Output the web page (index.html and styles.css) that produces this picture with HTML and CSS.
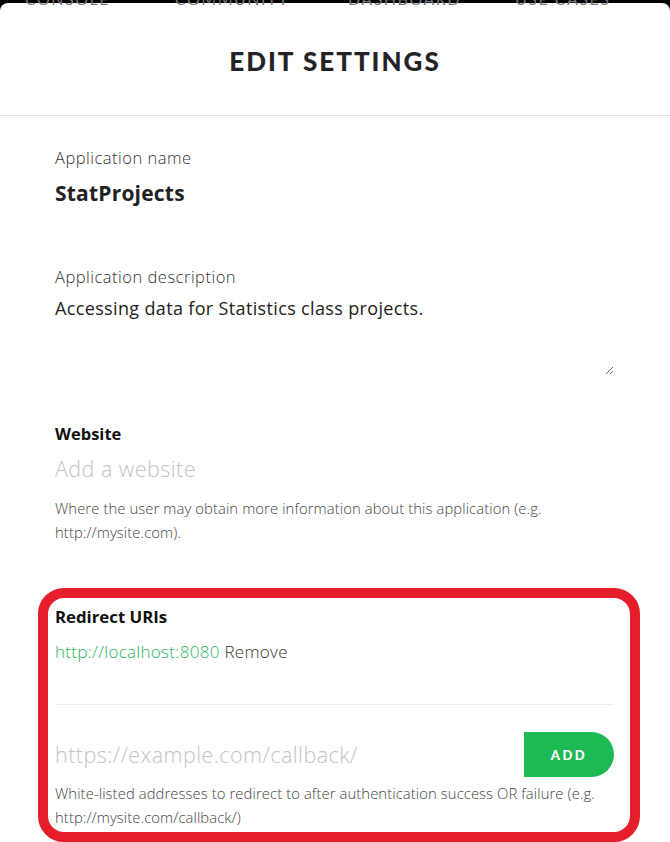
FILE: index.html
```html
<!DOCTYPE html>
<html lang="en">
<head>
<meta charset="utf-8">
<title>Edit Settings</title>
<link rel="stylesheet" href="styles.css">
</head>
<body>
<div class="topnav">
  <span class="nav-item n1">Console</span>
  <span class="nav-item n2">Community</span>
  <span class="nav-item n3">Dashboard</span>
  <span class="nav-item n4">Use Cases</span>
</div>
<div class="modal">
  <header class="modal-header">
    <h1 class="modal-title">Edit Settings</h1>
  </header>
  <form class="modal-body">
    <div class="group g-name">
      <div class="label">Application name</div>
      <div class="value">StatProjects</div>
    </div>
    <div class="group g-desc">
      <div class="label">Application description</div>
      <textarea class="textarea">Accessing data for Statistics class projects.</textarea>
    </div>
    <div class="group g-site">
      <div class="label-bold">Website</div>
      <input class="text-input" type="text" placeholder="Add a website">
      <p class="help">Where the user may obtain more information about this application (e.g. http://mysite.com).</p>
    </div>
    <div class="group g-redirect">
      <div class="label-bold">Redirect URIs</div>
      <div class="uri-row"><span class="uri">http://localhost:8080</span> <span class="remove">Remove</span></div>
      <div class="divider"></div>
      <div class="add-row">
        <input class="text-input add-input" type="text" placeholder="https://example.com/callback/">
        <button class="add-btn" type="button">Add</button>
      </div>
      <p class="help help-redirect">White-listed addresses to redirect to after authentication success OR failure (e.g. http://mysite.com/callback/)</p>
    </div>
  </form>
</div>
</body>
</html>
```
FILE: styles.css
```css
* { box-sizing: border-box; }
html, body { margin: 0; padding: 0; }
body {
  background: #000;
  font-family: "Open Sans", "Liberation Sans", sans-serif;
  color: #222;
  height: 842px;
  overflow: hidden;
  position: relative;
}
.topnav {
  position: absolute;
  top: 0; left: 0; right: 0;
  height: 9px;
  overflow: hidden;
  z-index: 5;
}
.nav-item {
  position: absolute;
  top: -9px;
  font-family: "Lato", sans-serif;
  font-size: 16px;
  line-height: 16px;
  text-transform: uppercase;
  letter-spacing: 1.5px;
  color: #777;
}
.n1 { left: 25px; }
.n2 { left: 175px; }
.n3 { left: 348px; }
.n4 { left: 515px; }
.modal {
  margin-top: 3px;
  background: #fff;
  border-radius: 8px 8px 0 0;
  min-height: 839px;
}
.modal-header {
  height: 113px;
  border-bottom: 1px solid #e3e3e3;
  display: flex;
  align-items: center;
  justify-content: center;
}
.modal-title {
  margin: 0;
  padding-top: 3px;
  font-family: "Lato", sans-serif;
  font-size: 26px;
  font-weight: 900;
  letter-spacing: 2px;
  text-transform: uppercase;
  color: #222326;
}
.modal-body {
  padding: 30px 56px 0 55px;
  display: flex;
  flex-direction: column;
}
.label {
  font-size: 16.5px;
  line-height: 24px;
  font-weight: 300;
  letter-spacing: 0.5px;
  color: #333;
}
.value {
  margin-top: 9px;
  font-size: 21px;
  line-height: 28px;
  font-weight: 700;
  letter-spacing: 0.2px;
  color: #222;
}
.g-desc { margin-top: 58px; }
.textarea {
  display: block;
  width: 100%;
  height: 80px;
  margin-top: 6px;
  padding: 0;
  border: none;
  outline: none;
  resize: vertical;
  font-family: inherit;
  font-size: 18px;
  line-height: 26px;
  letter-spacing: 0.35px;
  color: #222;
  background: transparent;
}
.g-site { margin-top: 47px; }
.label-bold {
  font-size: 16.5px;
  line-height: 24px;
  font-weight: 700;
  color: #111;
}
.text-input {
  display: block;
  width: 100%;
  height: 30px;
  margin-top: 7px;
  padding: 0;
  border: none;
  outline: none;
  font-family: inherit;
  font-size: 21.5px;
  font-weight: 300;
  letter-spacing: 0.45px;
  color: #222;
  background: transparent;
}
.text-input::placeholder { color: #c4c4c4; }
.help {
  margin: 13px 0 0;
  font-size: 14.8px;
  line-height: 24px;
  font-weight: 300;
  letter-spacing: 0.1px;
  color: #444;
}
.g-redirect {
  margin-top: 61px;
  position: relative;
}
.g-redirect::before {
  content: "";
  position: absolute;
  top: -17px;
  left: -17px;
  right: -26px;
  bottom: -13px;
  border: 10px solid #e61e29;
  border-radius: 26px;
  pointer-events: none;
}
.g-redirect .label-bold { font-size: 16.8px; }
.uri-row {
  margin-top: 11px;
  font-size: 17px;
  line-height: 24px;
  font-weight: 300;
  letter-spacing: 0.3px;
}
.uri { color: #2bb35b; }
.remove { color: #333; }
.divider {
  margin-top: 40px;
  height: 1px;
  background: #ececec;
}
.add-row {
  margin-top: 27px;
  display: flex;
  align-items: center;
}
.add-input {
  flex: 1;
  margin-top: 0;
}
.add-btn {
  width: 90px;
  height: 45px;
  border: none;
  border-radius: 0 23px 23px 0;
  background: #1db954;
  color: #fff;
  font-family: "Lato", sans-serif;
  font-size: 13px;
  font-weight: 900;
  letter-spacing: 2.5px;
  text-transform: uppercase;
}
.help-redirect { margin-top: 4px; }
```
